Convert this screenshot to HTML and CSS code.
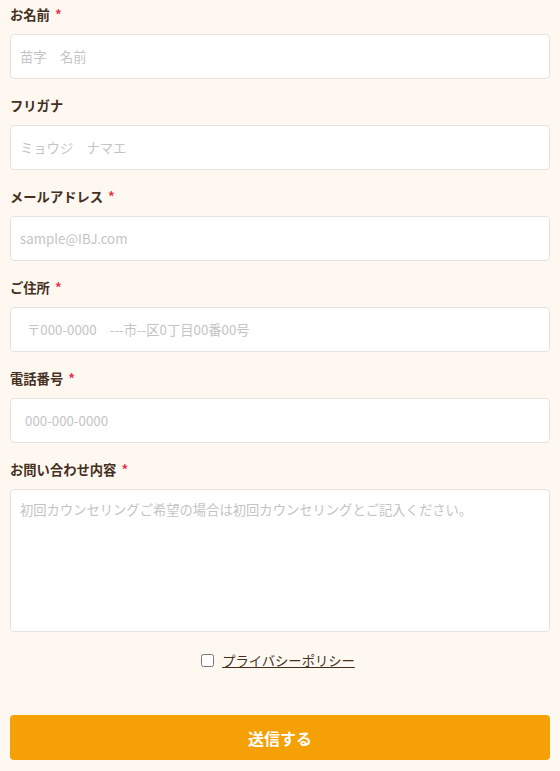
FILE: index.html
```html
<!DOCTYPE html>
<html lang="ja">
<head>
    <meta charset="UTF-8">
    <title>お問い合わせ</title>
    <link rel="stylesheet" href="styles.css">
</head>
<body>
    <form class="contact-form">
        <div class="field">
            <label class="label">お名前 <span class="req">*</span></label>
            <input class="input" type="text" placeholder="苗字　名前">
        </div>
        <div class="field">
            <label class="label">フリガナ</label>
            <input class="input" type="text" placeholder="ミョウジ　ナマエ">
        </div>
        <div class="field">
            <label class="label">メールアドレス <span class="req">*</span></label>
            <input class="input" type="email" placeholder="sample@IBJ.com">
        </div>
        <div class="field">
            <label class="label">ご住所 <span class="req">*</span></label>
            <input class="input input-indent" type="text" placeholder="〒000-0000　---市--区0丁目00番00号">
        </div>
        <div class="field">
            <label class="label">電話番号 <span class="req">*</span></label>
            <input class="input input-indent-sm" type="tel" placeholder="000-000-0000">
        </div>
        <div class="field">
            <label class="label">お問い合わせ内容 <span class="req">*</span></label>
            <textarea class="input textarea" placeholder="初回カウンセリングご希望の場合は初回カウンセリングとご記入ください。"></textarea>
        </div>
        <div class="privacy">
            <input type="checkbox" id="agree" class="check">
            <a href="#" class="privacy-link">プライバシーポリシー</a>
        </div>
        <button type="button" class="submit">送信する</button>
    </form>
</body>
</html>
```

FILE: styles.css
```css
body {
    margin: 0;
    padding: 5px 10px 10px;
    background-color: #fff8f1;
    font-family: "Noto Sans CJK JP", "Noto Sans", sans-serif;
    color: #45301f;
}
.contact-form {
    display: flex;
    flex-direction: column;
}
.field {
    display: flex;
    flex-direction: column;
    margin-bottom: 17px;
}
.label {
    font-size: 13.3px;
    font-weight: 700;
    line-height: 20px;
    margin-bottom: 9px;
}
.req {
    color: #e8344e;
    margin-left: 2px;
}
.input {
    box-sizing: border-box;
    width: 100%;
    height: 45px;
    padding: 0 9px;
    font-family: inherit;
    font-size: 13.3px;
    color: #333;
    background-color: #fff;
    border: 1px solid #e6e3e0;
    border-radius: 4px;
    outline: none;
}
.input::placeholder {
    color: #c4c4c4;
}
.input-indent {
    padding-left: 16px;
}
.input-indent-sm {
    padding-left: 14px;
}
.textarea {
    height: 143px;
    padding-top: 9px;
    resize: none;
    line-height: 22px;
}
.privacy {
    display: flex;
    justify-content: center;
    align-items: center;
    gap: 8px;
    height: 22px;
}
.check {
    width: 13px;
    height: 13px;
    margin: 0 0 0 -4px;
}
.privacy-link {
    font-size: 13.3px;
    color: #45301f;
    text-decoration: underline;
}
.submit {
    margin-top: 44px;
    height: 45px;
    border: none;
    border-radius: 4px;
    background-color: #f5a004;
    color: #fff;
    font-family: inherit;
    font-size: 16px;
    font-weight: 700;
}
```
